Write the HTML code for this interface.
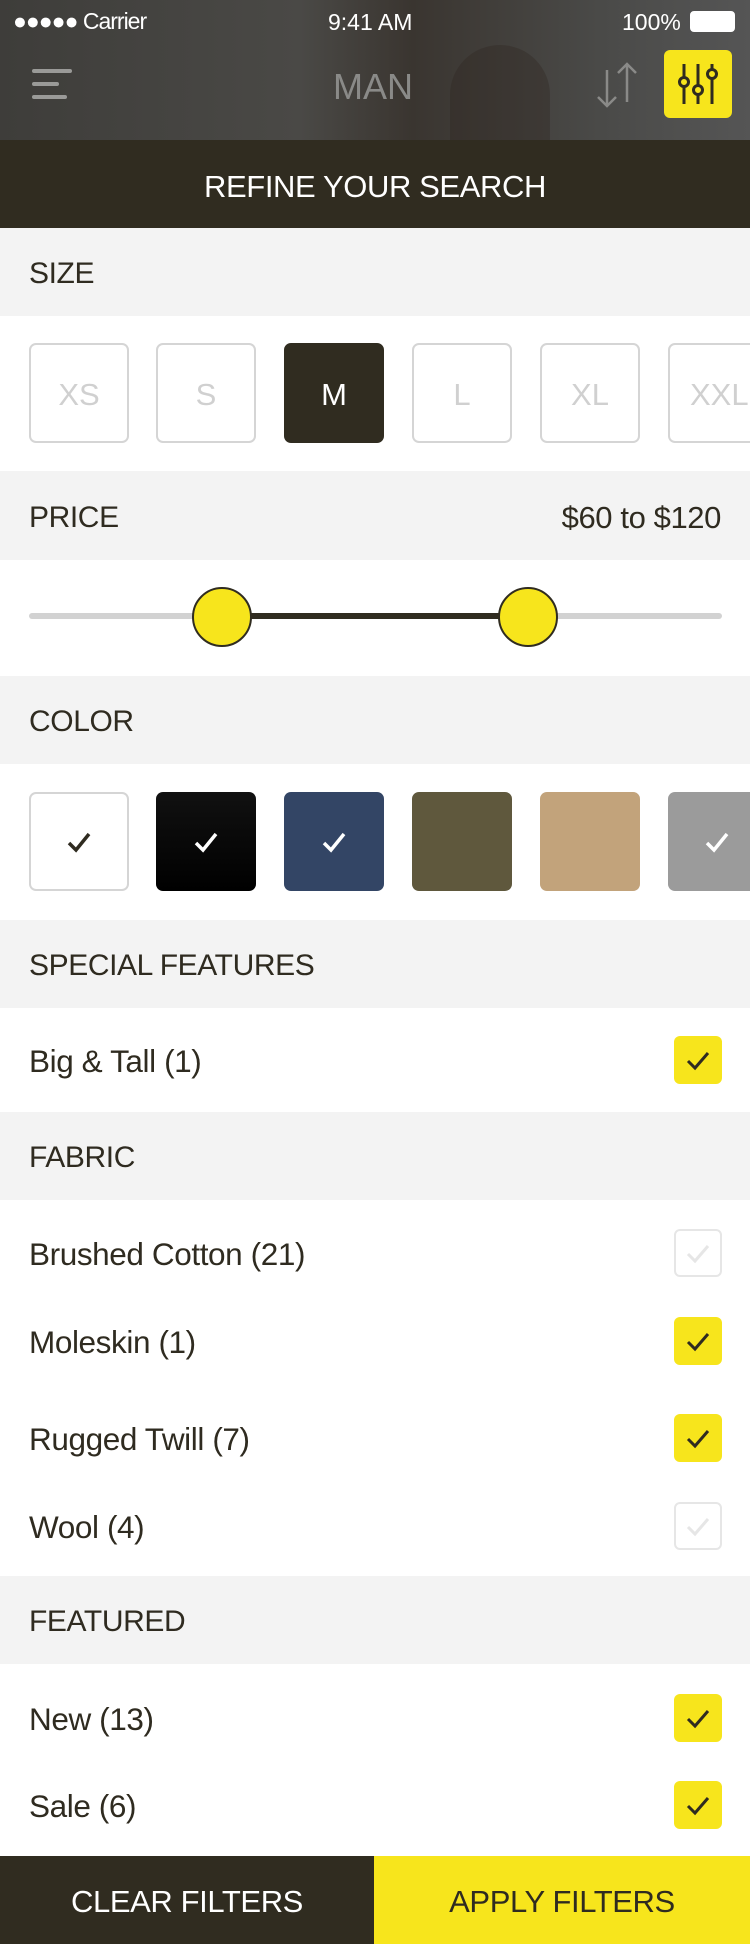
<!DOCTYPE html>
<html><head><meta charset="utf-8"><style>
*{margin:0;padding:0;box-sizing:border-box}
body{width:750px;height:1944px;background:#fff;font-family:"Liberation Sans",sans-serif;color:#2f2b20;position:relative;overflow:hidden}
.abs{position:absolute}
.hdr{position:absolute;left:0;width:750px;background:#f3f3f3;font-size:30px;padding-left:29px;padding-top:4px;display:flex;align-items:center;letter-spacing:-0.4px}
.lbl{position:absolute;left:29px;font-size:31.5px;letter-spacing:-0.4px;transform:translateY(-46%)}
.cb{position:absolute;left:674px;width:48px;height:48px;border-radius:6px;background:#f7e51c;transform:translateY(-50%)}
.cb.off{background:#fff;border:2px solid #e6e6e6}
.sz{position:absolute;top:343px;width:100px;height:100px;border:2px solid #d5d5d5;border-radius:7px;color:#d0d0d0;font-size:31px;display:flex;align-items:center;justify-content:center;padding-top:4px}
.sw{position:absolute;top:792px;width:100px;height:99px;border-radius:7px;display:flex;align-items:center;justify-content:center}
</style></head><body>
<div class="abs" style="left:0;top:0;width:750px;height:140px;background:linear-gradient(90deg,#3e3d3a 0%,#4a4946 40%,#3a3530 55%,#4a4a48 80%,#555 100%)"></div>
<div class="abs" style="left:450px;top:45px;width:100px;height:95px;background:#2e2620;border-radius:50px 50px 0 0;opacity:.35"></div>
<div class="abs" style="left:0;top:0;width:750px;height:40px;color:#fff;font-size:23px">
 <span class="abs" style="left:13px;top:8px;letter-spacing:-1px">●●●●● Carrier</span>
 <span class="abs" style="left:328px;top:9px">9:41 AM</span>
 <span class="abs" style="left:622px;top:9px">100%</span>
 <span class="abs" style="left:690px;top:11px;width:45px;height:21px;border:2px solid #fff;border-radius:4px;background:#fff"></span>
</div>
<div class="abs" style="left:32px;top:69px;width:40px;height:4px;background:#9a9a98;border-radius:2px"></div>
<div class="abs" style="left:32px;top:82px;width:27px;height:4px;background:#9a9a98;border-radius:2px"></div>
<div class="abs" style="left:32px;top:95px;width:35px;height:4px;background:#9a9a98;border-radius:2px"></div>
<div class="abs" style="left:333px;top:66px;font-size:36px;color:#8a8a88">MAN</div>
<svg class="abs" style="left:592px;top:62px" width="50" height="46" viewBox="0 0 50 46" fill="none" stroke="#8a8a88" stroke-width="2.5"><path d="M15 8V44M6 35l9 9 9-9M35 40V2M26 11l9-9 9 9"/></svg>
<div class="abs" style="left:664px;top:50px;width:68px;height:68px;background:#f7e51c;border-radius:6px"></div>
<svg class="abs" style="left:664px;top:50px" width="68" height="68" viewBox="0 0 68 68" fill="none" stroke="#2f2b20" stroke-width="3"><path d="M20 14V54M34 14V54M48 14V54"/><circle cx="20" cy="32" r="4.5" fill="#f7e51c"/><circle cx="34" cy="40" r="4.5" fill="#f7e51c"/><circle cx="48" cy="24" r="4.5" fill="#f7e51c"/></svg>
<div class="abs" style="left:0;top:140px;width:750px;height:88px;background:#302c20;color:#fff;font-size:31px;display:flex;align-items:center;justify-content:center;letter-spacing:-0.4px;padding-top:6px">REFINE YOUR SEARCH</div>

<div class="hdr" style="top:228px;height:88px">SIZE</div>
<div class="sz" style="left:29px">XS</div>
<div class="sz" style="left:156px">S</div>
<div class="sz" style="left:284px;background:#302c20;border-color:#302c20;color:#fff">M</div>
<div class="sz" style="left:412px">L</div>
<div class="sz" style="left:540px">XL</div>
<div class="sz" style="left:668px;justify-content:flex-start;padding-left:20px">XXL</div>

<div class="hdr" style="top:471px;height:89px">PRICE<span style="position:absolute;right:29px;font-size:31px">$60 to $120</span></div>
<div class="abs" style="left:29px;top:613px;width:693px;height:6px;background:#d2d2d2;border-radius:3px"></div>
<div class="abs" style="left:222px;top:613px;width:306px;height:6px;background:#302c20"></div>
<div class="abs" style="left:192px;top:587px;width:60px;height:60px;border-radius:50%;background:#f7e51c;border:2px solid #302c20"></div>
<div class="abs" style="left:498px;top:587px;width:60px;height:60px;border-radius:50%;background:#f7e51c;border:2px solid #302c20"></div>

<div class="hdr" style="top:676px;height:88px">COLOR</div>
<div class="sw" style="left:29px;border:2px solid #d5d5d5;background:#fff"><svg width="26" height="22" viewBox="0 0 26 22"><path d="M3 12l7 7L23 3" fill="none" stroke="#2f2b20" stroke-width="3.5"/></svg></div>
<div class="sw" style="left:156px;background:linear-gradient(#111,#000)"><svg width="26" height="22" viewBox="0 0 26 22"><path d="M3 12l7 7L23 3" fill="none" stroke="#fff" stroke-width="3.5"/></svg></div>
<div class="sw" style="left:284px;background:#334565"><svg width="26" height="22" viewBox="0 0 26 22"><path d="M3 12l7 7L23 3" fill="none" stroke="#fff" stroke-width="3.5"/></svg></div>
<div class="sw" style="left:412px;background:#5f583d"></div>
<div class="sw" style="left:540px;background:#c2a37b"></div>
<div class="sw" style="left:668px;width:110px;background:#9b9b9b;justify-content:flex-start;padding-left:36px"><svg width="26" height="22" viewBox="0 0 26 22"><path d="M3 12l7 7L23 3" fill="none" stroke="#fff" stroke-width="3.5"/></svg></div>

<div class="hdr" style="top:920px;height:88px">SPECIAL FEATURES</div>
<div class="lbl" style="top:1060px">Big &amp; Tall (1)</div>
<div class="cb" style="top:1060px"></div>

<div class="hdr" style="top:1112px;height:88px">FABRIC</div>
<div class="lbl" style="top:1253px">Brushed Cotton (21)</div><div class="cb off" style="top:1253px"></div>
<div class="lbl" style="top:1341px">Moleskin (1)</div><div class="cb" style="top:1341px"></div>
<div class="lbl" style="top:1438px">Rugged Twill (7)</div><div class="cb" style="top:1438px"></div>
<div class="lbl" style="top:1526px">Wool (4)</div><div class="cb off" style="top:1526px"></div>

<div class="hdr" style="top:1576px;height:88px">FEATURED</div>
<div class="lbl" style="top:1718px">New (13)</div><div class="cb" style="top:1718px"></div>
<div class="lbl" style="top:1805px">Sale (6)</div><div class="cb" style="top:1805px"></div>

<div class="abs" style="left:0;top:1856px;width:374px;height:88px;background:#302c20;color:#fff;font-size:31px;display:flex;align-items:center;justify-content:center;letter-spacing:-0.4px;padding-top:4px">CLEAR FILTERS</div>
<div class="abs" style="left:374px;top:1856px;width:376px;height:88px;background:#f7e51c;color:#2f2b20;font-size:31px;display:flex;align-items:center;justify-content:center;letter-spacing:-0.4px;padding-top:4px">APPLY FILTERS</div>

<svg class="abs" style="left:0;top:0;pointer-events:none" width="750" height="1944">
<g fill="none" stroke="#2f2b20" stroke-width="3">
<path d="M688 1061l7 7 13-15"/>
<path d="M688 1342l7 7 13-15"/>
<path d="M688 1439l7 7 13-15"/>
<path d="M688 1719l7 7 13-15"/>
<path d="M688 1806l7 7 13-15"/>
</g>
<g fill="none" stroke="#e6e6e6" stroke-width="3">
<path d="M688 1254l7 7 13-15"/>
<path d="M688 1527l7 7 13-15"/>
</g>
</svg>
</body></html>
